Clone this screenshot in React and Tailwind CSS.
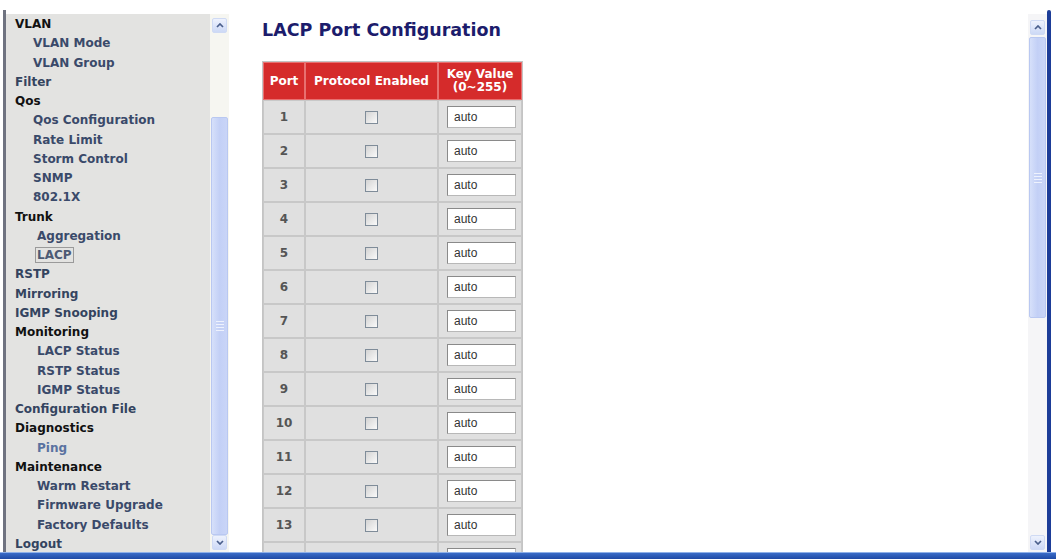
const menu = [
  { t: 'VLAN', k: 'head' },
  { t: 'VLAN Mode', k: 'sub' },
  { t: 'VLAN Group', k: 'sub' },
  { t: 'Filter', k: 'link' },
  { t: 'Qos', k: 'head' },
  { t: 'Qos Configuration', k: 'sub' },
  { t: 'Rate Limit', k: 'sub' },
  { t: 'Storm Control', k: 'sub' },
  { t: 'SNMP', k: 'sub' },
  { t: '802.1X', k: 'sub' },
  { t: 'Trunk', k: 'head' },
  { t: 'Aggregation', k: 'sub2' },
  { t: 'LACP', k: 'active' },
  { t: 'RSTP', k: 'link' },
  { t: 'Mirroring', k: 'link' },
  { t: 'IGMP Snooping', k: 'link' },
  { t: 'Monitoring', k: 'head' },
  { t: 'LACP Status', k: 'sub2' },
  { t: 'RSTP Status', k: 'sub2' },
  { t: 'IGMP Status', k: 'sub2' },
  { t: 'Configuration File', k: 'link' },
  { t: 'Diagnostics', k: 'head' },
  { t: 'Ping', k: 'ping' },
  { t: 'Maintenance', k: 'head' },
  { t: 'Warm Restart', k: 'sub2' },
  { t: 'Firmware Upgrade', k: 'sub2' },
  { t: 'Factory Defaults', k: 'sub2' },
  { t: 'Logout', k: 'link' },
]

const ports = [1, 2, 3, 4, 5, 6, 7, 8, 9, 10, 11, 12, 13]

function MenuItem({ t, k }) {
  if (k === 'head') return <div className="h-[19.25px] pl-[9px] text-[#111]">{t}</div>
  if (k === 'link') return <div className="h-[19.25px] pl-[9px] text-[#34445f]">{t}</div>
  if (k === 'active')
    return (
      <div className="h-[19.25px] pl-[29px]">
        <span className="border border-[#9a9a9a] px-px text-[#4d5a74]">{t}</span>
      </div>
    )
  if (k === 'ping') return <div className="h-[19.25px] pl-[31px] text-[#5a72a0]">{t}</div>
  const pad = k === 'sub2' ? 'pl-[31px]' : 'pl-[27px]'
  return <div className={`h-[19.25px] ${pad} text-[#3a4a6a]`}>{t}</div>
}

function ScrollArrow({ down }) {
  return (
    <div className="mx-auto flex h-[15px] w-[15px] items-center justify-center rounded-[2px] border border-[#cfdaf4] bg-gradient-to-b from-[#eef2fd] to-[#cdd9f6]">
      <svg width="8" height="5" viewBox="0 0 8 5">
        <path d={down ? 'M1 1 L4 4 L7 1' : 'M1 4 L4 1 L7 4'} fill="none" stroke="#4a5f8c" strokeWidth="1.7" />
      </svg>
    </div>
  )
}

function Thumb({ h }) {
  return (
    <div className={`${h} mx-[1px] flex items-center justify-center rounded-[2px] border border-[#b9c8f1] bg-gradient-to-r from-[#d6e0fa] via-[#c3d0f6] to-[#c9d5f7]`}>
      <div className="flex flex-col gap-[2px]">
        <div className="h-px w-[8px] bg-[#eef2fd]" />
        <div className="h-px w-[8px] bg-[#eef2fd]" />
        <div className="h-px w-[8px] bg-[#eef2fd]" />
        <div className="h-px w-[8px] bg-[#eef2fd]" />
      </div>
    </div>
  )
}

function PortRow({ p }) {
  return (
    <tr className="h-[34px] bg-[#e0e0e0]">
      <td className="border border-[#c8c8c8] text-center font-bold text-[#555]">{p}</td>
      <td className="border border-[#c8c8c8]">
        <div className="mx-auto h-[13px] w-[13px] border border-[#7f8c99] bg-gradient-to-br from-[#d4d4d4] to-[#fafafa]" />
      </td>
      <td className="border border-[#c8c8c8] pl-[8px]">
        <div className="flex h-[22px] w-[69px] items-center border border-[#b8b8b8] border-t-[#8a8a8a] border-l-[#8a8a8a] bg-white pl-[6px] font-['Liberation_Sans',Arial,sans-serif] text-[12px] text-[#333]">
          {p ? 'auto' : ''}
        </div>
      </td>
    </tr>
  )
}

export default function App() {
  return (
    <div className="flex h-[559px] w-[1056px] flex-col overflow-hidden bg-white font-['DejaVu_Sans',Verdana,sans-serif]">
      <div className="flex h-[552px]">
        {/* outer frame edge */}
        <div className="w-[3px]" />
        <div className="mt-[10px] w-[3px] bg-[#6f7380]" />

        {/* menu frame */}
        <div className="mt-[14px] w-[204px] overflow-hidden bg-[#e3e3e1] pt-[1px] text-[12px] font-bold leading-[19.25px]">
          {menu.map(m => (
            <MenuItem key={m.t} t={m.t} k={m.k} />
          ))}
        </div>

        {/* menu scrollbar */}
        <div className="mt-[14px] flex w-[19px] flex-col bg-[#f6f6f1] pt-[4px]">
          <ScrollArrow />
          <div className="h-[84px]" />
          <Thumb h="h-[418px]" />
          <div className="flex-1" />
          <div className="pb-[2px]">
            <ScrollArrow down />
          </div>
        </div>

        {/* content frame */}
        <div className="w-[799px] overflow-hidden pl-[33px] pt-[20px]">
          <h1 className="text-[17.5px] font-bold leading-[20px] text-[#1c1c6c]">LACP Port Configuration</h1>
          <table className="mt-[21px] border-separate border-spacing-0 border border-[#c4c4c4] text-[12px]">
            <thead>
              <tr className="h-[38px] bg-[#d52b2b] font-bold leading-[13px] text-white">
                <th className="w-[42px] border border-[#e87070]">Port</th>
                <th className="w-[133px] border border-[#e87070]">Protocol Enabled</th>
                <th className="w-[84px] border border-[#e87070]">
                  Key Value
                  <br />
                  (0~255)
                </th>
              </tr>
            </thead>
            <tbody>
              {ports.map(p => (
                <PortRow key={p} p={p} />
              ))}
              {/* next row, scrolled below the frame edge */}
              <PortRow p="" />
            </tbody>
          </table>
        </div>

        {/* content scrollbar */}
        <div className="mt-[14px] flex w-[19px] flex-col bg-[#f5f5f7] pt-[6px]">
          <ScrollArrow />
          <div className="h-[2px]" />
          <Thumb h="h-[281px]" />
          <div className="flex-1" />
          <div className="pb-[2px]">
            <ScrollArrow down />
          </div>
        </div>

        <div className="mt-[10px] w-[4px] rounded-t-[2px] bg-[#1d3d98]" />
        <div className="flex-1" />
      </div>
      <div className="h-[7px] border-t border-[#8fb0e8] bg-gradient-to-b from-[#3a6cc8] to-[#1f4aa5]" />
    </div>
  )
}
